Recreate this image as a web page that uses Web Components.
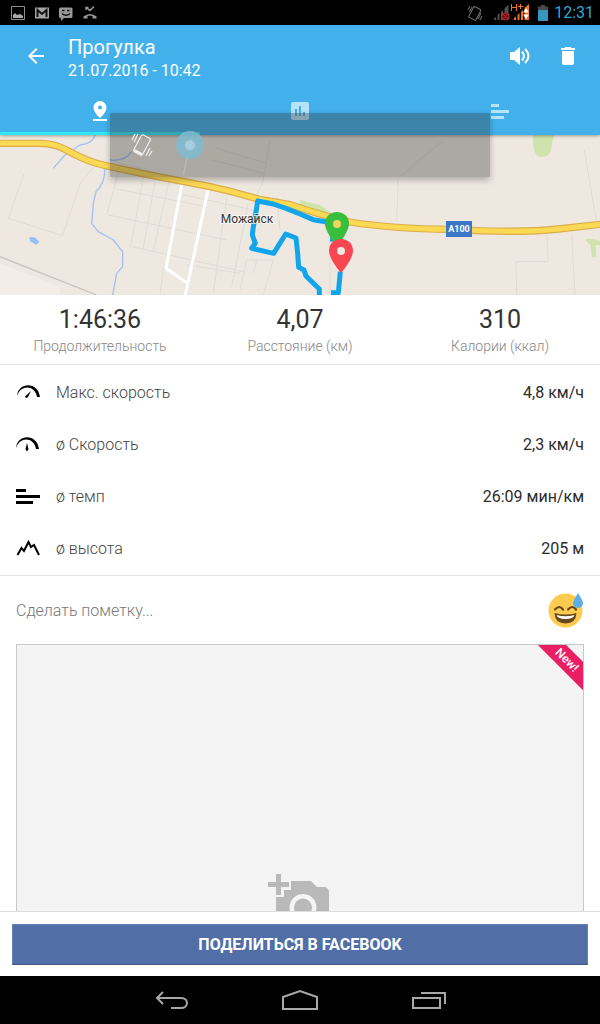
<!DOCTYPE html>
<html lang="ru">
<head>
<meta charset="utf-8">
<meta name="viewport" content="width=device-width, initial-scale=1">
<title>Прогулка</title>
<style>
  html, body { height: 100%; margin: 0; }
  body { font-family: Roboto, "Noto Sans", sans-serif; color: #333; background: #fff; }
</style>
</head>
<body>
<activity-app></activity-app>
<script>
const define = (name, html) => {
  const tpl = document.createElement('template');
  tpl.innerHTML = '<style>*{box-sizing:border-box}svg{display:block}button{font:inherit;color:inherit;background:none;border:0;padding:0;cursor:pointer}</style>' + html;
  customElements.define(name, class extends HTMLElement {
    constructor() {
      super();
      this.attachShadow({ mode: 'open' }).append(tpl.content.cloneNode(true));
    }
  });
};

define('status-bar', `
<style>
  :host { display: flex; align-items: center; justify-content: space-between; height: 25px; flex: none; padding: 0 6px 0 10px; background: #000; color: #33a5d6; }
  .group { display: flex; align-items: center; gap: 8px; }
  time { font-size: 16px; line-height: 25px; }
  .right { gap: 6px; }
</style>
<div class="group">
  <svg width="16" height="16" viewBox="0 0 16 16"><path d="M1.500 1.500h13v13h-13z" fill="none" stroke="#8c8c8c"/><path d="M3 13v-3l2-2 2 2 3-1 3 2v2z" fill="#aaa"/></svg>
  <svg width="16" height="16" viewBox="0 0 16 16"><path d="M1 2.500h14v11H1z" fill="#a5a5a5"/><path d="M3.500 12V5l4.500 4 4.500-4v7" fill="none" stroke="#111" stroke-width="2"/></svg>
  <svg width="16" height="16" viewBox="0 0 16 16"><path d="M2 2.500h11a1.500 1.500 0 0 1 1.500 1.500v7.500a1.500 1.500 0 0 1-1.500 1.500H6l-3 3v-3H2.500A1.500 1.500 0 0 1 1 11.500V4z" fill="#999"/><path d="M4 5.500h2.500M9 5.500h2.500M4 8.500q4 3.500 8 0" fill="none" stroke="#111" stroke-width="1.500"/></svg>
  <svg width="16" height="16" viewBox="0 0 16 16"><path d="M1.500 13.500V11.500Q8 6.500 14.500 11.500v2h-4v-2.500Q8 10 5.500 11v2.500z" fill="#999"/><path d="M4.500 2.500 8 5.500l4-4M4 5V2.500h2.500" fill="none" stroke="#999" stroke-width="1.500"/></svg>
</div>
<div class="group right">
  <svg width="16" height="18" viewBox="0 0 16 18"><g fill="none" stroke="#777"><rect x="4" y="3.500" width="8" height="12" rx="1" transform="rotate(28 8 9)"/><path d="M1 6l2-4M2.500 8 5 3M11 15l3-6M13 16l2-4"/></g></svg>
  <svg width="43" height="20" viewBox="0 0 43 20"><path d="M5 17v-1.500l2-1.500v3zM8.500 17v-5l2-2v7zM12 17V9l2-2v10zM15.500 17V5.500l4-4V17z" fill="#505050"/><circle cx="16.500" cy="13.500" r="3.500" fill="#511" stroke="#c4222c"/><path d="m14 11 5 5m0-5-5 5" stroke="#c4222c"/><path d="M25 17v-2l2-1.500V17zM28.500 17v-5l2-2v7zM32 17V9l2-2v10zM35.500 17V5l4.500-4v16z" fill="#f27321"/><path d="m37 5 3 4.500h-6zM37 16l3-4.500h-6z" fill="#fff"/><path d="M22.500 1v7M27.500 1v7M22.500 4.500h5M29 3.500h5M31.500 1v5" fill="none" stroke="#f27321"/></svg>
  <svg width="10" height="16" viewBox="0 0 10 16"><path d="M3 0h4v1.500h3V5H0V1.500h3z" fill="#484848"/><path d="M0 5h10v11H0z" fill="#3796bd"/></svg>
  <time datetime="12:31">12:31</time>
</div>`);

define('app-header', `
<style>
  :host { display: block; flex: none; position: relative; z-index: 1; background: #42b1eb; color: #fff; box-shadow: 0 1px 3px #0005; }
  .bar { display: flex; align-items: center; height: 62px; padding: 0 8px 0 12px; }
  .icon { display: grid; place-items: center; width: 48px; height: 48px; }
  .titles { flex: 1; padding: 5px 0 0 8px; }
  h1 { margin: 0; font-size: 20px; line-height: 24px; font-weight: 400; }
  p { margin: 0; font-size: 16px; line-height: 24px; }
  nav { display: grid; grid-template-columns: repeat(3, 1fr); height: 48px; }
  nav button { display: grid; place-items: center; padding-top: 2px; border-bottom: 3px solid transparent; color: #b5e3fb; }
  nav button[aria-selected=true] { border-color: #2ee8fa; color: #fff; }
</style>
<div class="bar">
  <button class="icon" aria-label="Назад"><svg width="24" height="24" viewBox="0 0 24 24" fill="currentColor"><path d="M20 11H7.830l5.590-5.590L12 4l-8 8 8 8 1.410-1.410L7.830 13H20z"/></svg></button>
  <div class="titles"><h1>Прогулка</h1><p>21.07.2016 - 10:42</p></div>
  <button class="icon" aria-label="Звук"><svg width="24" height="24" viewBox="0 0 24 24"><path d="M2 8h4l6-5v18l-6-5H2z" fill="currentColor"/><path d="M14 7.500q4 4.500 0 9M17 5q7 7 0 14" fill="none" stroke="currentColor" stroke-width="2"/></svg></button>
  <button class="icon" aria-label="Удалить"><svg width="24" height="24" viewBox="0 0 24 24" fill="currentColor"><path d="M6 19c0 1.100.9 2 2 2h8c1.100 0 2-.9 2-2V7H6zM19 4h-3.500l-1-1h-5l-1 1H5v2h14z"/></svg></button>
</div>
<nav role="tablist">
  <button role="tab" aria-selected="true" aria-label="Карта"><svg width="24" height="24" viewBox="0 0 24 24" fill="currentColor"><path d="M18.500 8.500C18.500 5 15.600 2 12 2S5.500 5 5.500 8.500C5.500 13.500 12 19 12 19s6.500-5.500 6.500-10.500zM10 8.500a2 2 0 1 1 4 0 2 2 0 0 1-4 0zM5 20v2h14v-2z"/></svg></button>
  <button role="tab" aria-selected="false" aria-label="Графики"><svg width="24" height="24" viewBox="0 0 24 24" fill="currentColor"><path d="M19 3H5a2 2 0 0 0-2 2v14c0 1.100.9 2 2 2h14c1.100 0 2-.9 2-2V5a2 2 0 0 0-2-2zM9 17H7v-7h2zm4 0h-2V7h2zm4 0h-2v-4h2z"/></svg></button>
  <button role="tab" aria-selected="false" aria-label="Этапы"><svg width="24" height="24" viewBox="0 0 24 24" fill="currentColor"><path d="M3 5h8v3H3zM3 11h18v3H3zM3 17h13v3H3z"/></svg></button>
</nav>`);

define('volume-panel', `
<style>
  :host { position: absolute; z-index: 2; top: 113px; left: 110px; right: 110px; height: 64px; display: flex; align-items: center; gap: 12px; padding: 0 16px; background: rgba(48,48,46,.35); border-radius: 1px; box-shadow: 0 3px 6px #0004; }
  button { width: 32px; height: 32px; display: grid; place-items: center; }
  input { flex: 1; min-width: 0; margin: 0 0 0 6px; height: 28px; appearance: none; background: none; }
  input::-webkit-slider-thumb { appearance: none; width: 28px; height: 28px; border: 0; border-radius: 50%; background: radial-gradient(circle, #a4d4e8 0 4px, #7ebbd0 6px); opacity: .85; }
</style>
<button aria-label="Вибрация"><svg width="24" height="26" viewBox="0 0 24 26"><g fill="none" stroke="#eee" stroke-width="1.200"><rect x="7" y="3.500" width="10" height="19" rx="2" transform="rotate(28 12 13)"/><path d="M4.500 18.500 12 22.500" stroke-width="3"/><path d="M2 8l3-6M4 10l4-8M16 24l4-8M19 24l3-5"/></g></svg></button>
<input type="range" min="0" max="7" value="0" aria-label="Громкость">`);

define('route-map', `
<style>
  :host { display: block; height: 160px; flex: none; background: #eee8e0; overflow: hidden; }
  svg { width: 100%; height: 100%; }
  text { font-family: Roboto, sans-serif; }
</style>
<svg viewBox="0 0 600 160" preserveAspectRatio="xMidYMid slice" role="img" aria-label="Карта маршрута">
  <g transform="translate(0 -5) scale(.333333)" fill="none" stroke-linejoin="round">
    <path d="M0 400 180 470V500H0z" fill="#f2eee7"/>
    <path d="M1600 15q-5 65 25 65t30-35l8-30zM900 210l60 15 35 25-5 14-90-38z" fill="#cfe3ac"/>
    <path d="M1755 328l20-2 40 10v14l-28-6 2 38h-14l-2-34z" fill="#cfe3ac"/>
    <path d="M88 322l16 0 14 14-10 8-18-10z" fill="#93c0f8"/>
    <g stroke="#dfdcd6" stroke-width="3">
      <path d="M72 132 25 265 187 317 243 155 283 110M340 175 620 230M345 95 800 220M325 255 680 330M395 350 730 425M650 55 800 100M640 90 790 130M360 110 320 255M435 115 392 350M470 125 430 355M510 140 460 365M530 190 760 240M680 200 640 490M745 220 695 470M810 30 790 150 770 200M830 200 840 300M490 410 480 495M720 480l20-90h80l-30 105M770 390 760 430M560 405 720 430"/>
      <path d="M1190 275 1195 145 1240 105 1325 35M1753 60 1790 280M1640 305l5 90h-97l2 100M1715 310l10 185M990 320v175"/>
    </g>
    <path d="M0 380 290 495" stroke="#c8c4c0" stroke-width="4"/>
    <path d="M285 15q-5 25-45 30L195 75 160 115M313 115q5 40-25 70l-8 35-5 60 20 25 45 25 28 35v45l-18 20-12 65M395 65q-20 30-65 25" stroke="#a0c3f4" stroke-width="4"/>
    <g stroke="#fff" stroke-width="9">
      <path d="M547 155 498 415 560 458M625 175 556 495"/>
      <path d="M575 20 550 135" stroke-width="5"/>
    </g>
    <path d="M0 40H120Q165 40 205 63C285 108 325 107 425 130L630 170Q700 185 775 207L870 224Q970 257 1050 276 1180 297 1350 298 1560 310 1675 297L1810 282" stroke="#dcae4b" stroke-width="22"/>
    <path d="M0 40H120Q165 40 205 63C285 108 325 107 425 130L630 170Q700 185 775 207L870 224Q970 257 1050 276 1180 297 1350 298 1560 310 1675 297L1810 282" stroke="#fcd955" stroke-width="15"/>
    <path d="M985 277 940 269 900 252 860 236 820 222 773 213 769 240 760 290 757 315 766 340 755 355 821 370 857 312 888 324 893 370 896 412 912 420 918 438 958 477V495M998 310V335M1021 425 1015 488H993" stroke="#12a5ec" stroke-width="15"/>
  </g>
  <text x="247" y="88" text-anchor="middle" font-size="12" fill="#333" stroke="#fff" stroke-opacity=".6" stroke-width="2" paint-order="stroke">Можайск</text>
  <rect x="446" y="86" width="26" height="16" fill="#3c76c8"/>
  <text x="459" y="97" text-anchor="middle" font-size="9" font-weight="700" fill="#fff">A100</text>
  <path d="M337 77c-7 0-12 5-12 11.500 0 9 12 22.500 12 22.500s12-13.500 12-22.500C349 82 344 77 337 77z" fill="#39be3c"/>
  <circle cx="337" cy="89" r="4" fill="#edd45f"/>
  <path d="M341 104c-7 0-12 5-12 11.500 0 9 12 22.500 12 22.500s12-13.500 12-22.500c0-6.500-5-11.500-12-11.500z" fill="#fa4650"/>
  <circle cx="341" cy="116" r="4" fill="#eee8e0"/>
</svg>`);

define('stat-item', `
<style>
  :host { display: block; text-align: center; }
  .value { font-size: 25px; line-height: 32px; color: #333; }
  .label { font-size: 14px; line-height: 20px; font-weight: 300; color: #888; }
</style>
<div class="value"><slot></slot></div>
<div class="label"><slot name="label"></slot></div>`);

define('metric-row', `
<style>
  :host { display: flex; align-items: center; height: 52px; padding: 0 16px; font-size: 16px; line-height: 20px; }
  .icon { width: 24px; margin-right: 16px; }
  .label { flex: 1; font-weight: 300; color: #444; }
  .value { color: #2b2b2b; }
</style>
<span class="icon"><slot name="icon"></slot></span>
<span class="label"><slot></slot></span>
<span class="value"><slot name="value"></slot></span>`);

define('note-field', `
<style>
  :host { display: flex; align-items: center; height: 68px; padding: 0 16px; }
  input { flex: 1; min-width: 0; border: 0; outline: 0; padding: 2px 0 0; background: none; font: 300 16px/20px Roboto, sans-serif; color: #333; }
  input::placeholder { color: #777; opacity: 1; }
  button { flex: none; }
</style>
<input type="text" placeholder="Сделать пометку..." aria-label="Сделать пометку">
<button aria-label="Настроение"><svg width="36" height="36" viewBox="0 0 36 36"><circle cx="17.500" cy="18.500" r="17" fill="#fecb4e"/><path d="M7 17.500q4.500-5 8 0M20 17.500q4.500-5 8 0" fill="none" stroke="#65471b" stroke-width="2.200" stroke-linecap="round"/><path d="M6.500 21Q17.500 24 28.500 21 28 31.500 17.500 31.500T6.500 21z" fill="#65471b"/><path d="M8.500 23q9 2.500 18 0-1 4-9 4t-9-4z" fill="#fff"/><path d="M30 1q5 8 5 10a5 5 0 0 1-10 0Q25 9 30 1z" fill="#5dadec"/></svg></button>`);

define('photo-drop', `
<style>
  :host { display: block; margin: 0 16px 16px; }
  .box { position: relative; display: grid; place-items: center; width: 100%; height: 516px; border: 1px solid #c8c8c8; background: #f4f4f4; overflow: hidden; }
  .ribbon { position: absolute; top: 5px; right: -44px; width: 120px; transform: rotate(45deg); background: #e91e63; color: #fff; font-size: 12px; line-height: 20px; font-weight: 500; text-align: center; }
</style>
<button class="box" aria-label="Добавить фото">
  <svg width="64" height="60" viewBox="0 0 64 60"><path d="M8 2h5v8h8v5h-8v8H8v-8H0v-5h8z" fill="#b9b9b9"/><path fill-rule="evenodd" d="M23 9h20l6 6h7a5 5 0 0 1 5 5v30a5 5 0 0 1-5 5H13a5 5 0 0 1-5-5V25h8v-7h7zM35 22a13.500 13.500 0 1 0 0 27 13.500 13.500 0 0 0 0-27z" fill="#b9b9b9"/><circle cx="35" cy="35.500" r="9" fill="#b9b9b9"/></svg>
  <span class="ribbon">New!</span>
</button>`);

define('share-bar', `
<style>
  :host { display: block; flex: none; padding: 12px 12px 11px; border-top: 1px solid #ddd; background: #fff; }
  button { display: block; width: 100%; height: 41px; background: #526ea6; border: 1px solid #6580b4; border-bottom-color: #3c5687; border-radius: 1px; color: #fff; font-size: 16px; line-height: 20px; font-weight: 700; }
</style>
<button><slot></slot></button>`);

define('system-nav', `
<style>
  :host { display: flex; justify-content: center; flex: none; height: 48px; background: #000; }
  button { width: 128px; display: grid; place-items: center; padding-top: 2px; }
  svg { fill: none; stroke: #a8a8a8; stroke-width: 2; }
</style>
<button aria-label="Назад"><svg width="36" height="24" viewBox="0 0 36 24"><path d="m9 3-6 6 6 6M3 9h24c8 0 8 10 0 10H17"/></svg></button>
<button aria-label="Домой"><svg width="36" height="24" viewBox="0 0 36 24"><path d="M1 20V8L18 2l17 6v12z"/></svg></button>
<button aria-label="Недавние"><svg width="36" height="24" viewBox="0 0 36 24"><path d="M3 9h27v10H3zM11 4h24v11"/></svg></button>`);

define('activity-app', `
<style>
  :host { position: relative; display: flex; flex-direction: column; height: 100vh; overflow: hidden; }
  main { flex: 1; min-height: 0; overflow: auto; scrollbar-width: none; }
  .stats { display: grid; grid-template-columns: repeat(3, 1fr); padding: 9px 0 8px; border-bottom: 1px solid #e4e4e4; }
  .metrics { padding: 2px 0 0; border-bottom: 1px solid #e4e4e4; }
</style>
<status-bar></status-bar>
<app-header></app-header>
<main>
  <route-map></route-map>
  <section class="stats">
    <stat-item>1:46:36<span slot="label">Продолжительность</span></stat-item>
    <stat-item>4,07<span slot="label">Расстояние (км)</span></stat-item>
    <stat-item>310<span slot="label">Калории (ккал)</span></stat-item>
  </section>
  <section class="metrics">
    <metric-row><svg slot="icon" width="24" height="24" viewBox="0 0 24 24"><path d="M1 15C2 1 22 0 24 16h-3C19 4 5 3 1 15zM15 10l-3 6q-2 2-3-.5z"/></svg>Макс. скорость<span slot="value">4,8 км/ч</span></metric-row>
    <metric-row><svg slot="icon" width="24" height="24" viewBox="0 0 24 24"><path d="M0 15C1 1 21 0 23 16h-3C18 4 4 3 0 15zM11 10l1.500 6q-.5 2-1.500 2t-1.500-2z"/></svg>ø Скорость<span slot="value">2,3 км/ч</span></metric-row>
    <metric-row><svg slot="icon" width="24" height="24" viewBox="0 0 24 24"><path d="M0 4h10v3H0zM0 10h24v3H0zM0 16h17v3H0z"/></svg>ø темп<span slot="value">26:09 мин/км</span></metric-row>
    <metric-row><svg slot="icon" width="24" height="24" viewBox="0 0 24 24"><path d="m1.500 18 4-7 2.500 3 4.500-9 2.500 5 3-2 5 10" fill="none" stroke="#000" stroke-width="2"/></svg>ø высота<span slot="value">205 м</span></metric-row>
  </section>
  <note-field></note-field>
  <photo-drop></photo-drop>
</main>
<share-bar>ПОДЕЛИТЬСЯ В FACEBOOK</share-bar>
<system-nav></system-nav>
<volume-panel></volume-panel>`);
</script>
</body>
</html>
